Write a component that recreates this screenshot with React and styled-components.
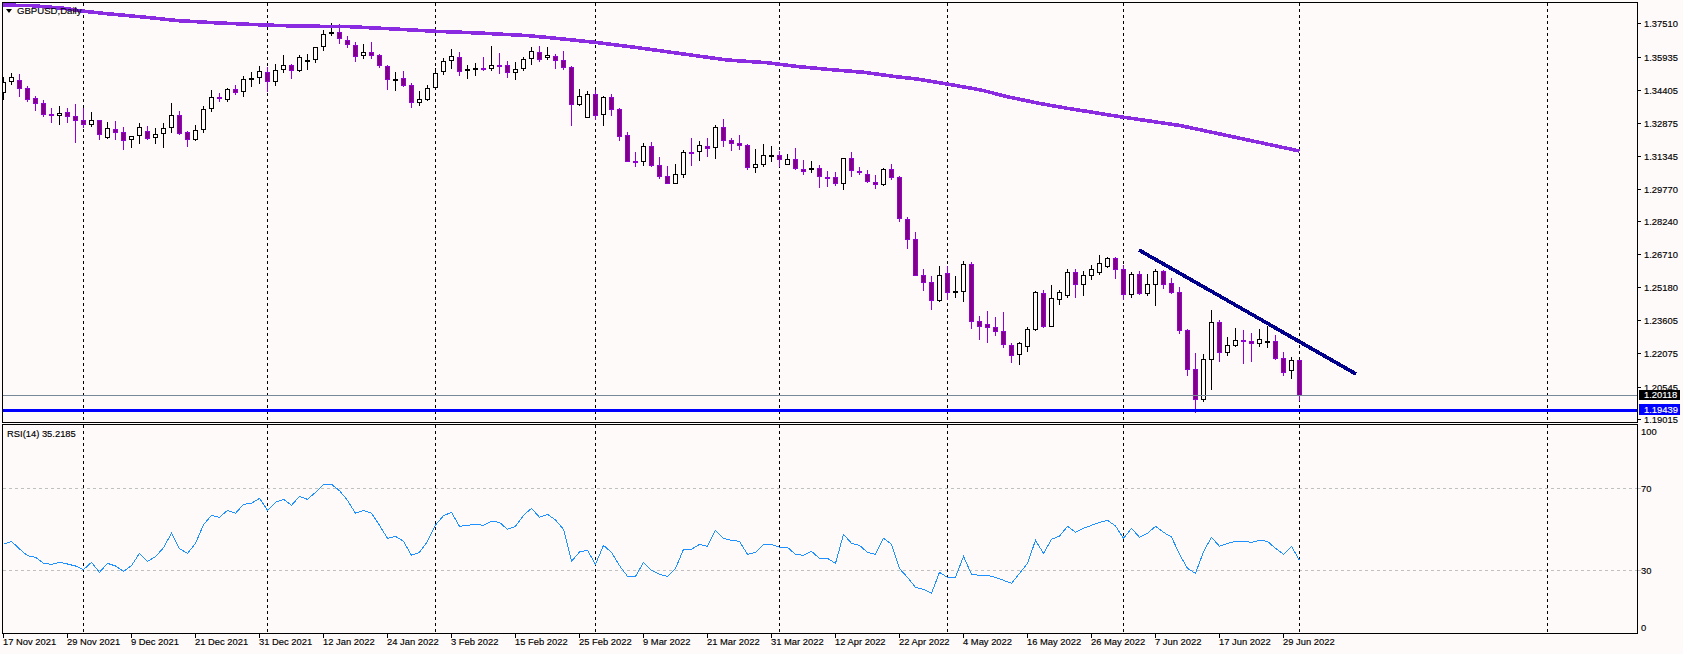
import React from "react";
import styled, { createGlobalStyle } from "styled-components";

const SNOW = "#fffafa";
const BULL_LINE = "#000000";
const BEAR_LINE = "#9400d3";
const BEAR_FILL = "#800080";

// [bodyTop, bodyBottom, wickTop, wickBottom, kind] read off the chart, in 3x pixels
const candlesA = [
  [245, 278, 232, 300, "w"], [232, 245, 220, 254, "w"], [240, 267, 222, 291, "p"], [265, 300, 258, 305, "p"],
  [294, 311, 289, 333, "p"], [310, 344, 300, 351, "p"], [342, 348, 324, 368, "p"], [340, 347, 318, 375, "w"],
  [337, 350, 325, 368, "p"], [348, 362, 312, 429, "p"], [360, 375, 325, 385, "p"], [361, 374, 337, 381, "w"],
  [361, 404, 361, 419, "p"], [385, 415, 366, 418, "w"], [387, 399, 363, 419, "p"], [397, 423, 381, 449, "p"],
  [409, 421, 409, 443, "w"], [382, 409, 370, 431, "w"], [394, 416, 378, 420, "p"], [403, 415, 385, 431, "w"],
  [385, 403, 370, 443, "w"], [346, 385, 309, 399, "w"], [346, 401, 333, 404, "p"], [396, 419, 393, 440, "p"],
  [391, 421, 375, 424, "w"], [328, 391, 319, 398, "w"], [292, 328, 270, 335, "w"], [292, 297, 280, 307, "p"],
  [268, 301, 265, 305, "w"], [267, 279, 255, 285, "p"], [238, 277, 228, 290, "w"], [235, 238, 216, 260, "w"],
  [214, 235, 198, 253, "w"], [217, 245, 202, 275, "p"], [211, 247, 191, 257, "w"], [196, 211, 165, 218, "w"],
  [195, 212, 192, 237, "p"], [172, 212, 165, 215, "w"], [181, 187, 163, 209, "w"], [142, 181, 142, 190, "w"],
  [103, 142, 91, 152, "w"], [97, 103, 70, 107, "w"], [96, 116, 72, 131, "p"], [120, 136, 108, 143, "p"],
  [135, 170, 127, 185, "p"], [157, 169, 132, 177, "w"], [157, 167, 126, 176, "p"], [165, 197, 162, 204, "p"],
  [199, 239, 194, 270, "p"], [236, 241, 216, 272, "w"], [235, 257, 213, 260, "p"], [255, 308, 250, 324, "p"],
  [298, 308, 274, 317, "w"], [265, 301, 256, 304, "w"], [218, 265, 203, 268, "w"], [184, 217, 175, 224, "w"],
  [169, 184, 148, 206, "w"], [172, 215, 156, 228, "p"], [208, 212, 194, 236, "w"], [205, 208, 190, 227, "w"],
  [204, 209, 170, 214, "p"], [196, 208, 138, 214, "w"], [196, 200, 159, 222, "p"], [196, 218, 183, 233, "p"],
  [208, 218, 186, 239, "w"], [178, 208, 172, 214, "w"], [154, 178, 141, 194, "w"], [157, 179, 139, 186, "p"],
  [166, 175, 141, 180, "w"], [168, 182, 162, 207, "p"],
];

const candlesB = [
  [0, 24, -27, 30, "p"], [21, 134, 18, 197, "p"], [109, 134, 87, 138, "w"], [103, 173, 93, 173, "w"],
  [102, 167, 90, 179, "p"], [111, 166, 108, 197, "w"], [111, 149, 102, 167, "p"], [147, 230, 145, 242, "p"],
  [225, 305, 216, 307, "p"], [303, 308, 276, 320, "p"], [259, 307, 250, 317, "w"], [258, 318, 246, 320, "p"],
  [315, 350, 291, 356, "p"], [348, 371, 318, 371, "p"], [343, 371, 312, 373, "w"], [277, 344, 270, 353, "w"],
  [276, 278, 234, 318, "p"], [256, 277, 243, 303, "w"], [259, 266, 234, 291, "p"], [202, 265, 195, 297, "w"],
  [201, 242, 177, 261, "p"], [240, 251, 234, 273, "p"], [249, 257, 225, 270, "p"], [255, 323, 252, 330, "p"],
  [313, 323, 267, 339, "w"], [286, 314, 252, 320, "w"], [285, 287, 258, 306, "w"], [285, 299, 273, 320, "p"],
  [298, 314, 282, 314, "w"], [297, 327, 264, 330, "p"], [327, 335, 300, 345, "p"], [324, 328, 303, 339, "w"],
  [324, 350, 315, 384, "p"], [351, 353, 333, 381, "p"], [351, 372, 336, 378, "p"], [295, 371, 295, 390, "w"],
  [294, 333, 276, 351, "p"], [334, 336, 321, 345, "p"], [342, 366, 330, 369, "p"], [366, 374, 345, 387, "p"],
  [328, 374, 324, 378, "w"], [327, 354, 312, 360, "p"], [351, 476, 348, 486, "p"], [477, 539, 471, 567, "p"],
  [537, 648, 516, 648, "p"], [645, 669, 627, 693, "p"], [666, 722, 648, 750, "p"], [646, 722, 618, 725, "w"],
  [639, 698, 618, 720, "p"], [693, 698, 648, 714, "w"], [613, 695, 603, 726, "w"], [612, 785, 606, 807, "p"],
  [783, 801, 768, 840, "p"], [792, 804, 753, 850, "p"], [801, 816, 771, 828, "p"], [813, 855, 756, 864, "p"],
  [856, 887, 849, 908, "p"], [848, 886, 846, 914, "w"], [808, 862, 801, 875, "w"], [697, 811, 694, 812, "w"],
  [700, 802, 690, 805, "p"], [715, 800, 675, 800, "w"], [697, 719, 690, 735, "w"], [637, 707, 628, 713, "w"],
  [637, 674, 628, 714, "p"], [646, 674, 633, 708, "w"], [628, 647, 615, 660, "w"], [610, 638, 585, 644, "w"],
  [595, 622, 592, 623, "w"], [594, 629, 591, 657, "p"],
];

const candlesC = [
  [117, 194, 105, 210, "p"], [133, 194, 126, 204, "w"], [133, 192, 123, 195, "p"], [163, 191, 132, 198, "w"],
  [124, 164, 118, 228, "w"], [123, 165, 120, 177, "p"], [159, 189, 144, 192, "p"], [186, 303, 171, 312, "p"],
  [300, 419, 297, 438, "p"], [417, 509, 369, 548, "p"], [388, 509, 372, 516, "w"], [277, 391, 240, 480, "w"],
  [276, 368, 270, 396, "p"], [346, 368, 321, 378, "w"], [331, 347, 294, 351, "w"], [330, 335, 300, 402, "p"],
  [334, 342, 309, 396, "p"], [328, 341, 297, 351, "w"], [333, 335, 288, 354, "w"], [333, 387, 315, 390, "p"],
  [384, 429, 366, 438, "p"], [391, 424, 381, 447, "w"], [390, 498, 390, 513, "p"],
];

const toPage = (rows, offset) =>
  rows.map(([top, bottom, high, low, kind]) => ({
    top: Math.round(top / 3 + offset),
    bottom: Math.round(bottom / 3 + offset),
    high: Math.round(high / 3 + offset),
    low: Math.round(low / 3 + offset),
    kind,
  }));

const candles = [...toPage(candlesA, 0), ...toPage(candlesB, 60), ...toPage(candlesC, 230)];
const barX = (i) => 3.5 + 8 * i;

const maPoints = [
  [3, 5], [32, 5.7], [64, 8.3], [82, 11], [107, 13.7], [143, 17], [179, 20.7], [214, 22.7], [264, 25], [296, 26],
  [350, 26.7], [400, 29.3], [436, 31.3], [479, 33], [529, 35.7], [560, 38.7], [595, 42.3], [640, 48], [680, 53.5],
  [727, 60], [767, 62.7], [799, 66.7], [835, 70], [864, 72.3], [896, 76.7], [917, 79], [947, 84], [981, 90],
  [1010, 97.3], [1039, 103.3], [1067, 108.3], [1089, 111.7], [1120, 116.7], [1180, 125.5], [1234, 137], [1299.5, 151],
];

const rsiRaw = [
  433, 424, 447, 467, 472, 490, 493, 487, 492, 498, 509, 487, 517, 490, 498, 514, 497, 460, 484, 470, 443, 400, 446, 460,
  430, 374, 346, 352, 331, 340, 313, 310, 295, 331, 307, 298, 316, 289, 298, 277, 253, 253, 272, 301, 340, 331, 340, 376,
  415, 409, 424, 466, 457, 424, 375, 347, 337, 379, 376, 373, 376, 364, 367, 388, 379, 346, 325, 352, 343, 360, 388, 484,
  456, 451, 493, 436, 457, 497, 529, 529, 487, 511, 523, 529, 506, 448, 448, 433, 439, 391, 415, 421, 424, 463, 457, 433,
  433, 442, 442, 463, 466, 454, 475, 475, 490, 403, 430, 436, 457, 463, 415, 433, 506, 532, 562, 568, 580, 517, 532, 532,
  469, 523, 526, 526, 532, 541, 550, 520, 490, 421, 460, 418, 408, 379, 397, 385, 376, 367, 361, 378, 415, 385, 412, 400,
  379, 397, 411, 463, 505, 520, 455, 412, 439, 430, 424, 424, 427, 421, 424, 445, 463, 439, 481,
];
const rsiPoints = rsiRaw.map((y, i) => `${barX(i)},${400 + y / 3}`).join(" ");

const gridLines = [83.5, 267.5, 435.5, 595.5, 779.5, 947.5, 1123.5, 1299.5, 1547.5];

const prices = [
  ["1.37510", 23], ["1.35935", 57], ["1.34405", 90], ["1.32875", 123], ["1.31345", 156], ["1.29770", 189],
  ["1.28240", 221], ["1.26710", 254], ["1.25180", 287], ["1.23605", 320], ["1.22075", 353], ["1.20545", 387],
  ["1.19015", 419],
];

const dates = [
  "17 Nov 2021", "29 Nov 2021", "9 Dec 2021", "21 Dec 2021", "31 Dec 2021", "12 Jan 2022", "24 Jan 2022",
  "3 Feb 2022", "15 Feb 2022", "25 Feb 2022", "9 Mar 2022", "21 Mar 2022", "31 Mar 2022", "12 Apr 2022",
  "22 Apr 2022", "4 May 2022", "16 May 2022", "26 May 2022", "7 Jun 2022", "17 Jun 2022", "29 Jun 2022",
];

const GlobalStyle = createGlobalStyle`
  html, body {
    margin: 0;
    background: ${SNOW};
    overflow: hidden;
  }
`;

const Terminal = styled.div`
  width: 1683px;
  height: 654px;
  box-sizing: border-box;
  padding: 2px 0 0 2px;
  background: ${SNOW};
  color: #000;
  font-family: "Liberation Sans", Arial, sans-serif;
  font-size: 9.4px;
  -webkit-text-stroke: 0.15px currentColor;
  display: flex;
  flex-direction: column;
`;

const Row = styled.div`
  display: flex;
  height: ${(p) => p.$height}px;
  margin-bottom: ${(p) => p.$gap || 0}px;
  flex: none;
`;

const Panel = styled.div`
  position: relative;
  width: 1636px;
  height: 100%;
  box-sizing: border-box;
  border: 1px solid #000;
  overflow: hidden;
`;

const Plot = styled.svg`
  display: block;
  width: 100%;
  height: 100%;
`;

const ChartTitle = styled.div`
  position: absolute;
  left: 3px;
  top: 1px;
  display: flex;
  align-items: center;
  gap: 5px;
  font-size: 9.6px;
  line-height: 13px;
`;

const TitleArrow = styled.span`
  width: 0;
  height: 0;
  border-style: solid;
  border-width: 4px 3.5px 0;
  border-color: #000 transparent transparent;
`;

const RsiLabel = styled.div`
  position: absolute;
  left: 4px;
  top: 2px;
  line-height: 13px;
`;

const Axis = styled.div`
  position: relative;
  flex: 1;
`;

const AxisLabel = styled.div.attrs((p) => ({ style: { top: `${p.$y}px` } }))`
  position: absolute;
  left: 0;
  height: 11px;
  margin-top: -5.5px;
  line-height: 11px;
  padding-left: ${(p) => p.$inset}px;
  white-space: nowrap;

  &::before {
    content: "";
    display: ${(p) => (p.$tick ? "block" : "none")};
    position: absolute;
    left: 0;
    top: 5px;
    width: 3px;
    height: 1px;
    background: ${(p) => p.$tick};
  }
`;

const PriceTag = styled.div.attrs((p) => ({ style: { top: `${p.$y}px` } }))`
  position: absolute;
  left: 1px;
  width: 41px;
  height: ${(p) => p.$h}px;
  box-sizing: border-box;
  padding-left: 5px;
  line-height: ${(p) => p.$h}px;
  background: ${(p) => p.$bg};
  color: #fff;
`;

const DateAxis = styled.div`
  display: flex;
  padding-left: 1px;
`;

const DateCell = styled.div`
  position: relative;
  flex: none;
  width: 64px;
  padding-top: 1px;
  line-height: 13px;
  white-space: nowrap;

  &::before {
    content: "";
    position: absolute;
    left: 0;
    top: 0;
    width: 1px;
    height: 4px;
    background: #000;
  }
`;

const Candle = ({ index, candle }) => {
  const x = barX(index);
  const bear = candle.kind === "p";
  const line = bear ? BEAR_LINE : BULL_LINE;
  return (
    <g shapeRendering="crispEdges">
      <line x1={x} x2={x} y1={candle.high} y2={candle.low} stroke={line} />
      <rect
        x={x - 2}
        y={candle.top + 0.5}
        width={4}
        height={Math.max(candle.bottom - candle.top - 1, 1)}
        fill={bear ? BEAR_FILL : SNOW}
        stroke={line}
      />
    </g>
  );
};

const PriceChart = () => (
  <Plot viewBox="3 3 1634 419">
    <g shapeRendering="crispEdges">
      {gridLines.map((x) => (
        <line key={x} x1={x} x2={x} y1={3} y2={422} stroke="#000" strokeDasharray="3 3" />
      ))}
    </g>
    {candles.map((c, i) => (
      <Candle key={i} index={i} candle={c} />
    ))}
    <g shapeRendering="crispEdges" fill="none">
      <polyline points={maPoints.map((p) => p.join(",")).join(" ")} stroke="#8a2be2" strokeWidth="3.6" />
      <line x1={1139} y1={250} x2={1356} y2={374} stroke="#00008b" strokeWidth="3.6" />
      <line x1={3} x2={1637} y1={395.5} y2={395.5} stroke="#778899" />
      <line x1={3} x2={1637} y1={410.5} y2={410.5} stroke="#0000ff" strokeWidth="3" />
    </g>
  </Plot>
);

const RsiChart = () => (
  <Plot viewBox="3 425 1634 208">
    <g shapeRendering="crispEdges">
      {[488.5, 570.5].map((y) => (
        <line key={y} x1={3} x2={1637} y1={y} y2={y} stroke="#c0c0c0" strokeDasharray="3 3" />
      ))}
      {gridLines.map((x) => (
        <line key={x} x1={x} x2={x} y1={425} y2={633} stroke="#000" strokeDasharray="3 3" />
      ))}
      <polyline points={rsiPoints} fill="none" stroke="#1e90ff" />
    </g>
  </Plot>
);

const App = () => (
  <Terminal>
    <GlobalStyle />
    <Row $height={421} $gap={1}>
      <Panel>
        <PriceChart />
        <ChartTitle>
          <TitleArrow />
          GBPUSD,Daily
        </ChartTitle>
      </Panel>
      <Axis>
        {prices.map(([label, y]) => (
          <AxisLabel key={label} $y={y - 2} $inset={6} $tick="#000">
            {label}
          </AxisLabel>
        ))}
        <PriceTag $y={388} $h={10} $bg="#000">1.20118</PriceTag>
        <PriceTag $y={402} $h={11} $bg="#0000ff">1.19439</PriceTag>
      </Axis>
    </Row>
    <Row $height={210}>
      <Panel>
        <RsiChart />
        <RsiLabel>RSI(14) 35.2185</RsiLabel>
      </Panel>
      <Axis>
        <AxisLabel $y={7} $inset={3}>100</AxisLabel>
        <AxisLabel $y={64} $inset={3} $tick="#c0c0c0">70</AxisLabel>
        <AxisLabel $y={146} $inset={3} $tick="#c0c0c0">30</AxisLabel>
        <AxisLabel $y={203} $inset={3}>0</AxisLabel>
      </Axis>
    </Row>
    <DateAxis>
      {dates.map((d) => (
        <DateCell key={d}>{d}</DateCell>
      ))}
    </DateAxis>
  </Terminal>
);

export default App;
